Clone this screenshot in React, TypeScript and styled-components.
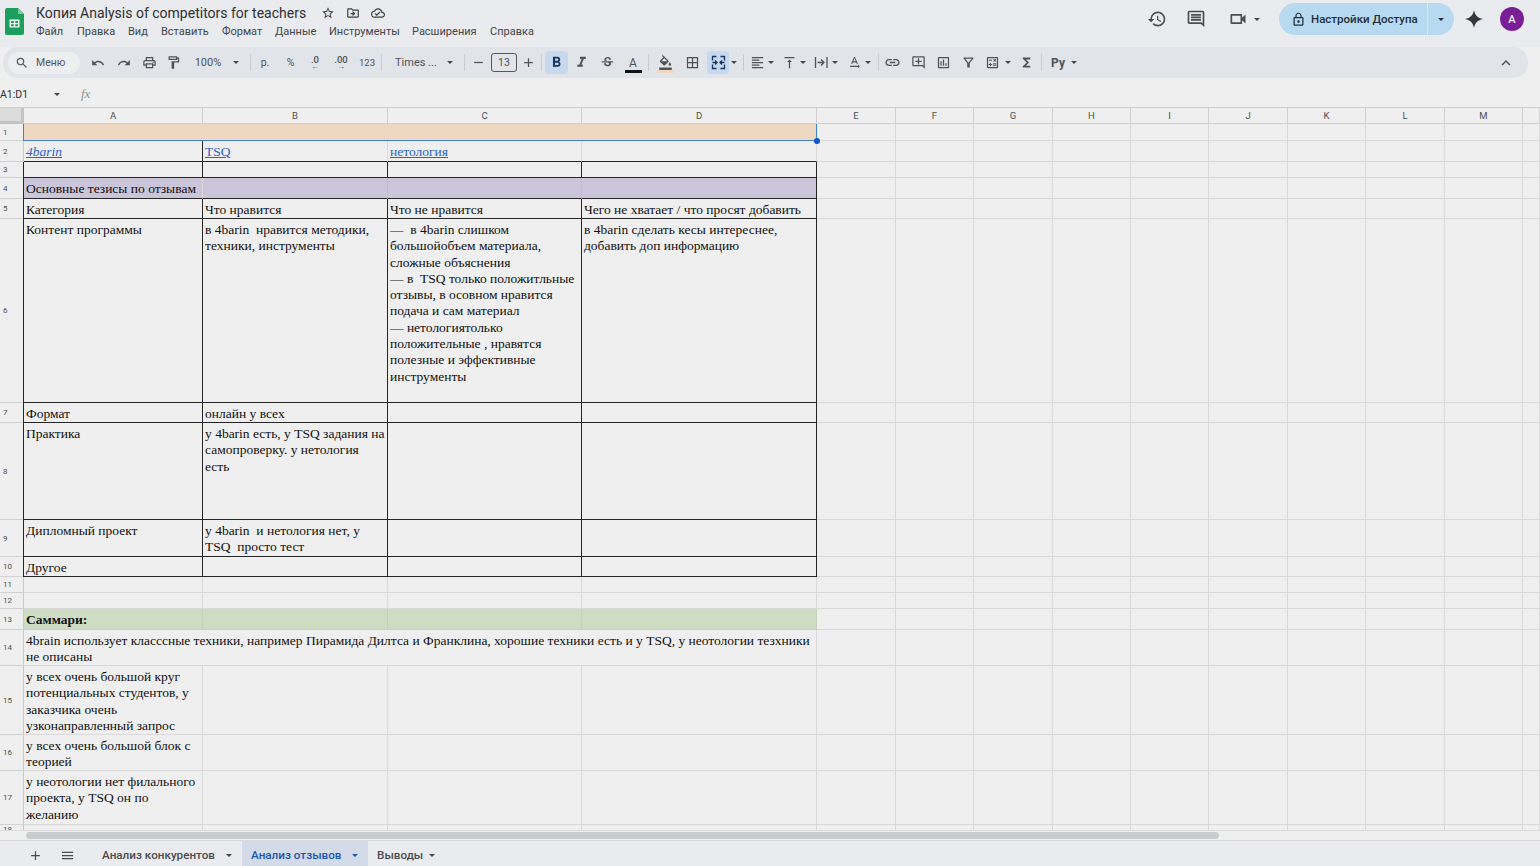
import React from "react";
import styled, { createGlobalStyle } from "styled-components";
import {
  MdOutlineStarBorder,
  MdOutlineDriveFileMove,
  MdOutlineCloudDone,
  MdHistory,
  MdOutlineComment,
  MdOutlineVideocam,
  MdLockOutline,
  MdSearch,
  MdUndo,
  MdRedo,
  MdOutlinePrint,
  MdOutlineFormatPaint,
  MdFormatBold,
  MdFormatItalic,
  MdStrikethroughS,
  MdOutlineFormatColorFill,
  MdBorderAll,
  MdFormatAlignLeft,
  MdVerticalAlignTop,
  MdLink,
  MdOutlineAddComment,
  MdOutlineInsertChart,
  MdOutlineFilterAlt,
  MdOutlineCalculate,
  MdFunctions,
  MdExpandLess,
  MdAdd,
  MdRemove,
  MdMenu,
  MdTextRotationNone,
} from "react-icons/md";

const GlobalStyle = createGlobalStyle`
  html, body {
    margin: 0;
    padding: 0;
    height: 100%;
    overflow: hidden;
    background: #efefef;
    font-family: Roboto, "Liberation Sans", sans-serif;
  }
`;

const Page = styled.div`
  width: 1540px;
  height: 866px;
  display: flex;
  flex-direction: column;
  overflow: hidden;
  background: #efefef;
`;

const TopBar = styled.header`
  height: 47px;
  display: flex;
  align-items: flex-start;
  background: #e9ebee;
  padding-left: 5px;
`;

const LogoWrap = styled.div`
  width: 31px;
  padding-top: 8px;
  flex: none;
`;

const TitleBlock = styled.div`
  display: flex;
  flex-direction: column;
`;

const TitleRow = styled.div`
  height: 25px;
  display: flex;
  align-items: center;
  color: #2e3033;
`;

const DocTitle = styled.span`
  font-size: 14px;
  width: 279px;
  white-space: nowrap;
`;

const TitleIcon = styled.span`
  width: 25px;
  display: flex;
  justify-content: center;
  font-size: 14px;
  color: #3d4043;
`;

const MenuRow = styled.nav`
  display: flex;
  color: #43474a;
  font-size: 11px;
  line-height: 13px;
`;

const MenuItem = styled.span<{ $w: number }>`
  width: ${(p) => p.$w}px;
  white-space: nowrap;
`;

const RightActions = styled.div`
  margin-left: auto;
  height: 38px;
  display: flex;
  align-items: center;
  color: #4b4e51;
`;

const ActionIcon = styled.span<{ $w: number }>`
  width: ${(p) => p.$w}px;
  display: flex;
  justify-content: center;
  font-size: 20px;
`;

const ShareButton = styled.div`
  width: 175px;
  height: 32px;
  margin-left: 19px;
  display: flex;
  border-radius: 16px;
  overflow: hidden;
  background: #b8daf0;
  color: #1f2f3e;
`;

const ShareMain = styled.div`
  flex: 1;
  display: flex;
  align-items: center;
  gap: 5px;
  padding-left: 12px;
  font-size: 11.5px;
  font-weight: 500;
  white-space: nowrap;
  border-right: 1px solid #dfe8ee;
  svg {
    font-size: 15px;
  }
`;

const ShareCaret = styled.div`
  width: 26px;
  display: flex;
  align-items: center;
  justify-content: center;
`;

const Avatar = styled.div`
  width: 24px;
  height: 24px;
  margin: 0 16px 0 6px;
  border-radius: 50%;
  background: #7b1f97;
  color: #f2e8f5;
  font-size: 11px;
  font-weight: 500;
  display: flex;
  align-items: center;
  justify-content: center;
`;

const Toolbar = styled.div`
  height: 31px;
  margin: 0 12px 0 3px;
  display: flex;
  align-items: center;
  background: #e1e4e9;
  border-radius: 15px;
  color: #505356;
`;

const SearchPill = styled.div`
  width: 72px;
  height: 22px;
  margin: 0 5px;
  padding-left: 7px;
  box-sizing: border-box;
  flex: none;
  display: flex;
  align-items: center;
  gap: 7px;
  border-radius: 11px;
  background: #eceef0;
  font-size: 10.5px;
  color: #55585b;
  svg {
    font-size: 14px;
  }
`;

const Tool = styled.div<{ $w: number; $ml?: number; $active?: boolean; $pl?: number }>`
  width: ${(p) => p.$w}px;
  height: 23px;
  margin-left: ${(p) => p.$ml ?? 0}px;
  padding-left: ${(p) => p.$pl ?? 0}px;
  box-sizing: border-box;
  flex: none;
  display: flex;
  align-items: center;
  justify-content: ${(p) => (p.$pl ? "flex-start" : "center")};
  border-radius: 4px;
  background: ${(p) => (p.$active ? "#c6d9ee" : "transparent")};
  color: ${(p) => (p.$active ? "#14365f" : "inherit")};
  font-size: 15px;
  position: relative;
`;

const ToolText = styled.span<{ $size?: number; $bold?: boolean }>`
  font-size: ${(p) => p.$size ?? 11}px;
  font-weight: ${(p) => (p.$bold ? 700 : 400)};
  white-space: nowrap;
`;

const DecimalText = styled.span`
  display: flex;
  flex-direction: column;
  align-items: center;
  font-size: 9.5px;
  font-weight: 500;
  line-height: 8px;
`;

const TinyArrow = styled.span`
  font-size: 8px;
  line-height: 6px;
`;

const Caret = styled.span<{ $color?: string }>`
  width: 0;
  height: 0;
  border-left: 3px solid transparent;
  border-right: 3px solid transparent;
  border-top: 3px solid ${(p) => p.$color ?? "#44474a"};
`;

const Sep = styled.span<{ $ml?: number }>`
  width: 1px;
  height: 17px;
  flex: none;
  margin-left: ${(p) => p.$ml ?? 0}px;
  background: #c9ccd0;
`;

const SizeBox = styled.div`
  width: 26px;
  height: 19px;
  box-sizing: border-box;
  border: 1px solid #55585b;
  border-radius: 3px;
  display: flex;
  align-items: center;
  justify-content: center;
  font-size: 10.5px;
`;

const ColorBar = styled.span<{ $c: string }>`
  position: absolute;
  left: 50%;
  bottom: 1px;
  width: 17px;
  height: 3px;
  margin-left: -8px;
  background: ${(p) => p.$c};
`;

const Collapse = styled.div`
  margin-left: auto;
  margin-right: 13px;
  font-size: 18px;
  display: flex;
`;

const FormulaBar = styled.div`
  height: 26px;
  margin-top: 3px;
  display: flex;
  align-items: center;
  font-size: 10.5px;
  color: #2e3033;
`;

const CellName = styled.div`
  width: 54px;
  flex: none;
`;

const FxLabel = styled.span`
  margin-left: 21px;
  font-family: "Liberation Serif", serif;
  font-style: italic;
  font-size: 13px;
  color: #8d8f91;
`;

const SheetArea = styled.div`
  height: 734px;
  flex: none;
  position: relative;
  overflow: hidden;
  border-top: 1px solid #cfcfcf;
  box-sizing: border-box;
`;

const Grid = styled.div`
  display: grid;
  grid-template-columns: 24px 179px 185px 194px 235px 79px 78px 79px 78px 78px 79px 78px 79px 78px 17px;
  grid-auto-rows: min-content;
`;

const Corner = styled.div`
  background: #dcdcdc;
  border-right: 3px solid #c4c4c4;
  border-bottom: 3px solid #c4c4c4;
  box-sizing: border-box;
`;

const ColHead = styled.div`
  height: 16px;
  background: #efefef;
  border-right: 1px solid #d2d2d2;
  border-bottom: 1px solid #cfcfcf;
  box-sizing: border-box;
  display: flex;
  align-items: center;
  justify-content: center;
  font-size: 9.5px;
  color: #4e5052;
`;

const RowHead = styled.div<{ $h: number }>`
  height: ${(p) => p.$h}px;
  background: #efefef;
  border-right: 1px solid #c8c8c8;
  border-bottom: 1px solid #d2d2d2;
  box-sizing: border-box;
  padding-left: 3px;
  display: flex;
  align-items: center;
  overflow: hidden;
  font-size: 8px;
  color: #4e5052;
`;

// b - black table border, t - barely visible seam on a filled row, f - plain grid line
type Line = "b" | "t" | "f";

const lineColor = (l?: Line) =>
  l === "b" ? "#262626" : l === "t" ? "rgba(0, 0, 0, 0.05)" : "#d9d9d9";

const Cell = styled.div<{
  $h: number;
  $span?: number;
  $bg?: string;
  $r?: Line;
  $bt?: Line;
  $left?: boolean;
  $bold?: boolean;
}>`
  height: ${(p) => p.$h}px;
  grid-column: span ${(p) => p.$span ?? 1};
  box-sizing: border-box;
  position: relative;
  padding: 3px 1px 0 2px;
  background: ${(p) => p.$bg ?? "transparent"};
  border-right: 1px solid ${(p) => lineColor(p.$r)};
  border-bottom: 1px solid ${(p) => lineColor(p.$bt)};
  ${(p) => (p.$left ? "box-shadow: -1px 0 0 #262626;" : "")}
  font-family: "Liberation Serif", serif;
  font-size: 13.5px;
  font-weight: ${(p) => (p.$bold ? 700 : 400)};
  line-height: 16.3px;
  color: #111;
  white-space: pre-wrap;
  overflow: hidden;
`;

const SelectedCell = styled.div`
  height: 17px;
  grid-column: span 4;
  box-sizing: border-box;
  background: #efd8c2;
  border-right: 1px solid #3f7fd6;
  border-bottom: 1px solid #3f7fd6;
  box-shadow: -1px 0 0 #3f7fd6;
`;

const SheetLink = styled.a<{ $italic?: boolean }>`
  color: #2a62c9;
  text-decoration: underline;
  font-style: ${(p) => (p.$italic ? "italic" : "normal")};
`;

const Handle = styled.span`
  position: absolute;
  left: 814px;
  top: 30px;
  width: 6px;
  height: 6px;
  border-radius: 50%;
  background: #0b57d0;
`;

const ScrollTrack = styled.div`
  position: absolute;
  left: 0;
  right: 0;
  bottom: 0;
  height: 11px;
  box-sizing: border-box;
  padding: 1px 0 0 26px;
  background: #efefef;
  border-top: 1px solid #dcdcdc;
  border-bottom: 1px solid #d9d9d9;
`;

const ScrollThumb = styled.div`
  width: 1193px;
  height: 7px;
  border-radius: 4px;
  background: #cbccce;
`;

const TabBar = styled.footer`
  flex: 1;
  display: flex;
  align-items: stretch;
  background: #e9ebee;
  font-size: 11.7px;
  font-weight: 500;
  color: #4a4d50;
`;

const BarIcon = styled.span<{ $ml: number }>`
  width: 24px;
  flex: none;
  margin-left: ${(p) => p.$ml}px;
  padding-top: 3px;
  display: flex;
  align-items: center;
  justify-content: center;
  font-size: 15px;
`;

const SheetTab = styled.div<{ $w: number; $active?: boolean; $ml?: number; $pr: number }>`
  width: ${(p) => p.$w}px;
  flex: none;
  margin-left: ${(p) => p.$ml ?? 0}px;
  box-sizing: border-box;
  padding: 3px ${(p) => p.$pr}px 0 9px;
  display: flex;
  align-items: center;
  justify-content: space-between;
  white-space: nowrap;
  background: ${(p) => (p.$active ? "#d3dbe9" : "transparent")};
  color: ${(p) => (p.$active ? "#1b55b3" : "inherit")};
`;

const columns = ["A", "B", "C", "D", "E", "F", "G", "H", "I", "J", "K", "L", "M"];

type CellData = {
  text?: React.ReactNode;
  span?: number;
  bg?: string;
  r?: Line;
  bt?: Line;
  left?: boolean;
  bold?: boolean;
};

const lilac = "#cbc5da";
const green = "#cedcc4";

const boxed = (texts: React.ReactNode[]): CellData[] =>
  texts.map((text, i) => ({ text, r: "b", bt: "b", left: i === 0 }));

const rows: { n: number; h: number; cells: CellData[] }[] = [
  { n: 1, h: 17, cells: [] },
  {
    n: 2,
    h: 21,
    cells: [
      { text: <SheetLink $italic>4barin</SheetLink>, r: "b", bt: "b" },
      { text: <SheetLink>TSQ</SheetLink>, r: "f", bt: "b" },
      { text: <SheetLink>нетология</SheetLink>, r: "f", bt: "b" },
      { r: "f", bt: "b" },
    ],
  },
  { n: 3, h: 16, cells: boxed(["", "", "", ""]) },
  {
    n: 4,
    h: 21,
    cells: [
      { text: "Основные тезисы по отзывам", bg: lilac, r: "f", bt: "b", left: true },
      { bg: lilac, r: "t", bt: "b" },
      { bg: lilac, r: "t", bt: "b" },
      { bg: lilac, r: "b", bt: "b" },
    ],
  },
  { n: 5, h: 20, cells: boxed(["Категория", "Что нравится", "Что не нравится", "Чего не хватает / что просят добавить"]) },
  {
    n: 6,
    h: 184,
    cells: boxed([
      "Контент программы",
      "в 4barin  нравится методики, техники, инструменты",
      "—  в 4barin слишком большойобъем материала, сложные объяснения\n— в  TSQ только положитльные отзывы, в осовном нравится подача и сам материал\n— нетологиятолько положительные , нравятся полезные и эффективные инструменты",
      "в 4barin сделать кесы интереснее, добавить доп информацию",
    ]),
  },
  { n: 7, h: 20, cells: boxed(["Формат", "онлайн у всех", "", ""]) },
  { n: 8, h: 97, cells: boxed(["Практика", "у 4barin есть, у TSQ задания на самопроверку. у нетология есть", "", ""]) },
  { n: 9, h: 37, cells: boxed(["Дипломный проект", "у 4barin  и нетология нет, у TSQ  просто тест", "", ""]) },
  { n: 10, h: 20, cells: boxed(["Другое", "", "", ""]) },
  { n: 11, h: 16, cells: [{}, {}, {}, {}] },
  { n: 12, h: 16, cells: [{}, {}, {}, {}] },
  {
    n: 13,
    h: 21,
    cells: [
      { text: "Саммари:", bg: green, bold: true, r: "t", bt: "t" },
      { bg: green, r: "t", bt: "t" },
      { bg: green, r: "t", bt: "t" },
      { bg: green, r: "t", bt: "t" },
    ],
  },
  {
    n: 14,
    h: 36,
    cells: [
      {
        span: 4,
        text: "4brain использует класссные техники, например Пирамида Дилтса и Франклина, хорошие техники есть и у TSQ, у неотологии тезхники не описаны",
      },
    ],
  },
  {
    n: 15,
    h: 69,
    cells: [
      { text: "у всех очень большой круг потенциальных студентов, у заказчика очень узконаправленный запрос" },
      {},
      {},
      {},
    ],
  },
  { n: 16, h: 36, cells: [{ text: "у всех очень большой блок с теорией" }, {}, {}, {}] },
  { n: 17, h: 54, cells: [{ text: "у неотологии нет филального проекта, у TSQ он по желанию" }, {}, {}, {}] },
  { n: 18, h: 9, cells: [{}, {}, {}, {}] },
];

function SheetsLogo() {
  return (
    <svg width="19" height="27" viewBox="0 0 19 27">
      <path d="M2 0h11l6 6v19a2 2 0 0 1-2 2H2a2 2 0 0 1-2-2V2a2 2 0 0 1 2-2z" fill="#1c9e5c" />
      <path d="M13 0l6 6h-6z" fill="#7fc9a2" />
      <path d="M4.5 11.5h10v8h-10z M6 13v2h2.8v-2z M10.2 13v2H13v-2z M6 16.2v2h2.8v-2z M10.2 16.2v2H13v-2z" fill="#f1f5f2" fillRule="evenodd" />
    </svg>
  );
}

function Sparkle() {
  return (
    <svg width="18" height="18" viewBox="0 0 18 18">
      <path d="M9 0c.8 5 3.6 8 9 9-5.4 1-8.2 4-9 9-.8-5-3.600-8-9-9 5.400-1 8.200-4 9-9z" fill="#33363a" />
    </svg>
  );
}

function MergeIcon() {
  return (
    <svg width="15" height="15" viewBox="0 0 15 15" fill="none" stroke="#14365f" strokeWidth="1.3">
      <path d="M5.500 1.500H1.500v4M9.500 1.500h4v4M5.500 13.500h-4v-4M9.500 13.500h4v-4" />
      <path d="M1.500 7.500h4M4 5.500l2 2-2 2M13.500 7.500h-4M11 5.500l-2 2 2 2" />
    </svg>
  );
}

function WrapIcon() {
  return (
    <svg width="15" height="15" viewBox="0 0 15 15" fill="none" stroke="#505356" strokeWidth="1.3">
      <path d="M1.500 2v11M13 2v11M3.500 7.500h6M7 4.500l3 3-3 3" />
    </svg>
  );
}

export default function App() {
  return (
    <Page>
      <GlobalStyle />
      <TopBar>
        <LogoWrap>
          <SheetsLogo />
        </LogoWrap>
        <TitleBlock>
          <TitleRow>
            <DocTitle>Копия Analysis of competitors for teachers</DocTitle>
            <TitleIcon><MdOutlineStarBorder /></TitleIcon>
            <TitleIcon><MdOutlineDriveFileMove /></TitleIcon>
            <TitleIcon><MdOutlineCloudDone /></TitleIcon>
          </TitleRow>
          <MenuRow>
            <MenuItem $w={41}>Файл</MenuItem>
            <MenuItem $w={51}>Правка</MenuItem>
            <MenuItem $w={33}>Вид</MenuItem>
            <MenuItem $w={61}>Вставить</MenuItem>
            <MenuItem $w={53}>Формат</MenuItem>
            <MenuItem $w={54}>Данные</MenuItem>
            <MenuItem $w={83}>Инструменты</MenuItem>
            <MenuItem $w={78}>Расширения</MenuItem>
            <MenuItem $w={50}>Справка</MenuItem>
          </MenuRow>
        </TitleBlock>
        <RightActions>
          <ActionIcon $w={26}><MdHistory /></ActionIcon>
          <ActionIcon $w={52}><MdOutlineComment /></ActionIcon>
          <ActionIcon $w={32}><MdOutlineVideocam /></ActionIcon>
          <Caret />
          <ShareButton>
            <ShareMain><MdLockOutline />Настройки Доступа</ShareMain>
            <ShareCaret><Caret $color="#1f2f3e" /></ShareCaret>
          </ShareButton>
          <ActionIcon $w={40}><Sparkle /></ActionIcon>
          <Avatar>A</Avatar>
        </RightActions>
      </TopBar>

      <Toolbar>
        <SearchPill><MdSearch />Меню</SearchPill>
        <Tool $w={26}><MdUndo size={14} /></Tool>
        <Tool $w={25}><MdRedo size={14} /></Tool>
        <Tool $w={26}><MdOutlinePrint /></Tool>
        <Tool $w={23}><MdOutlineFormatPaint /></Tool>
        <Tool $w={46}><ToolText>100%</ToolText></Tool>
        <Tool $w={10}><Caret /></Tool>
        <Sep $ml={9} />
        <Tool $w={28}><ToolText $size={10.5}>р.</ToolText></Tool>
        <Tool $w={23}><ToolText $size={10.5}>%</ToolText></Tool>
        <Tool $w={26}><DecimalText>.0<TinyArrow>←</TinyArrow></DecimalText></Tool>
        <Tool $w={26}><DecimalText>.00<TinyArrow>→</TinyArrow></DecimalText></Tool>
        <Tool $w={26}><ToolText $size={9.5}>123</ToolText></Tool>
        <Sep $ml={1} />
        <Tool $w={63} $pl={13}><ToolText>Times ...</ToolText></Tool>
        <Tool $w={10}><Caret /></Tool>
        <Sep $ml={9} />
        <Tool $w={26}><MdRemove /></Tool>
        <Tool $w={26}><SizeBox>13</SizeBox></Tool>
        <Tool $w={23}><MdAdd /></Tool>
        <Sep $ml={1} />
        <Tool $w={23} $ml={3} $active><MdFormatBold size={17} /></Tool>
        <Tool $w={26}><MdFormatItalic size={17} /></Tool>
        <Tool $w={26}><MdStrikethroughS /></Tool>
        <Tool $w={26}><ToolText $size={12}>A</ToolText><ColorBar $c="#111" /></Tool>
        <Sep $ml={2} />
        <Tool $w={32}><MdOutlineFormatColorFill /><ColorBar $c="#efd8c2" /></Tool>
        <Tool $w={22}><MdBorderAll /></Tool>
        <Tool $w={22} $ml={4} $active><MergeIcon /></Tool>
        <Tool $w={10}><Caret /></Tool>
        <Sep $ml={4} />
        <Tool $w={20} $ml={3}><MdFormatAlignLeft /></Tool>
        <Tool $w={8}><Caret /></Tool>
        <Tool $w={20} $ml={4}><MdVerticalAlignTop /></Tool>
        <Tool $w={8}><Caret /></Tool>
        <Tool $w={20} $ml={4}><WrapIcon /></Tool>
        <Tool $w={8}><Caret /></Tool>
        <Tool $w={20} $ml={5}><MdTextRotationNone /></Tool>
        <Tool $w={8}><Caret /></Tool>
        <Sep $ml={6} />
        <Tool $w={26}><MdLink size={17} /></Tool>
        <Tool $w={26}><MdOutlineAddComment /></Tool>
        <Tool $w={25}><MdOutlineInsertChart /></Tool>
        <Tool $w={24}><MdOutlineFilterAlt /></Tool>
        <Tool $w={24}><MdOutlineCalculate /></Tool>
        <Tool $w={8}><Caret /></Tool>
        <Tool $w={26} $ml={1}><MdFunctions /></Tool>
        <Sep $ml={2} />
        <Tool $w={20} $ml={6}><ToolText $size={12} $bold>Ру</ToolText></Tool>
        <Tool $w={8} $ml={2}><Caret /></Tool>
        <Collapse><MdExpandLess /></Collapse>
      </Toolbar>

      <FormulaBar>
        <CellName>A1:D1</CellName>
        <Caret />
        <FxLabel>fx</FxLabel>
      </FormulaBar>

      <SheetArea>
        <Grid>
          <Corner />
          {columns.map((c) => (
            <ColHead key={c}>{c}</ColHead>
          ))}
          <ColHead />
          {rows.map((row) => (
            <React.Fragment key={row.n}>
              <RowHead $h={row.h}>{row.n}</RowHead>
              {row.n === 1 ? (
                <SelectedCell />
              ) : (
                row.cells.map((c, i) => (
                  <Cell
                    key={i}
                    $h={row.h}
                    $span={c.span}
                    $bg={c.bg}
                    $r={c.r}
                    $bt={c.bt}
                    $left={c.left}
                    $bold={c.bold}
                  >
                    {c.text}
                  </Cell>
                ))
              )}
              {columns.slice(4).map((c) => (
                <Cell key={c} $h={row.h} />
              ))}
              <Cell $h={row.h} />
            </React.Fragment>
          ))}
        </Grid>
        <Handle />
        <ScrollTrack>
          <ScrollThumb />
        </ScrollTrack>
      </SheetArea>

      <TabBar>
        <BarIcon $ml={23}><MdAdd /></BarIcon>
        <BarIcon $ml={8}><MdMenu /></BarIcon>
        <SheetTab $w={139} $ml={14} $pr={0}>Анализ конкурентов<Caret /></SheetTab>
        <SheetTab $w={126} $ml={10} $pr={10} $active>Анализ отзывов<Caret $color="#1b55b3" /></SheetTab>
        <SheetTab $w={76} $pr={9}>Выводы<Caret /></SheetTab>
      </TabBar>
    </Page>
  );
}
